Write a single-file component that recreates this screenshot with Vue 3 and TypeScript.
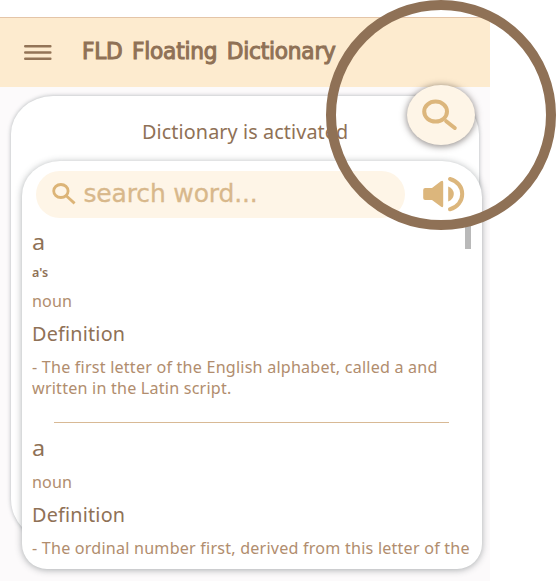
<script setup lang="ts">
interface Entry {
  word: string
  forms?: string
  kind: string
  lines: string[]
}

const entries: Entry[] = [
  {
    word: 'a',
    forms: "a's",
    kind: 'noun',
    lines: ['- The first letter of the English alphabet, called a and', 'written in the Latin script.'],
  },
  {
    word: 'a',
    kind: 'noun',
    lines: ['- The ordinal number first, derived from this letter of the'],
  },
]
</script>

<template>
  <div class="stage">
    <main class="app">
      <header class="bar">
        <svg class="menu" width="28" height="18" viewBox="0 0 28 18">
          <path d="M1.2 2.2H26.4M1.2 8.5H26.4M1.2 14.8H26.4" />
        </svg>
        <h1 class="title">FLD Floating Dictionary</h1>
      </header>

      <section class="card">
        <p class="status">Dictionary is activated</p>
      </section>

      <section class="popup">
        <div class="tools">
          <label class="search">
            <svg width="24" height="22" viewBox="0 0 24 22">
              <ellipse cx="8.9" cy="8" rx="7.2" ry="6.5" />
              <path d="M14.2 12.8L22.6 20.4" />
            </svg>
            <span class="placeholder">search word...</span>
          </label>
          <svg class="sound" width="42" height="36" viewBox="0 0 42 36">
            <path d="M2.2 12H9L17.8 5.2Q20.2 3.8 20.2 6.2V29.8Q20.2 32 17.8 30.6L9 24H2.2Q0.2 24 0.2 22V14Q0.2 12 2.2 12Z" />
            <path d="M25.2 10.4Q30.8 12.8 30.8 18Q30.8 23.2 25.2 25.6Z" />
            <path class="wave" d="M27 3C34.5 5 39.2 11 39.2 18S34.5 31.5 27 33.2" />
          </svg>
        </div>

        <div class="scroll-thumb"></div>

        <div class="entries">
          <article v-for="(entry, i) in entries" :key="i" class="entry">
            <h2 class="word">{{ entry.word }}</h2>
            <p v-if="entry.forms" class="forms">{{ entry.forms }}</p>
            <p class="kind">{{ entry.kind }}</p>
            <h3 class="heading">Definition</h3>
            <p v-for="(line, n) in entry.lines" :key="n" class="line" :class="{ next: n > 0 }">{{ line }}</p>
            <hr v-if="i < entries.length - 1" class="rule" />
          </article>
        </div>
      </section>
    </main>

    <button class="fab" aria-label="Search">
      <svg width="36" height="32" viewBox="0 0 36 32">
        <ellipse cx="13.6" cy="12.6" rx="11.4" ry="10" />
        <path d="M24.2 22.2L32.8 29" />
      </svg>
    </button>
    <div class="ring"></div>
  </div>
</template>

<style>
body {
  background: #fff;
}
</style>

<style scoped>
.stage {
  position: relative;
  box-sizing: border-box;
  width: 557px;
  height: 582px;
  padding-top: 17px;
  overflow: hidden;
  background: #fff;
  font-family: "Noto Sans", sans-serif;
  color: #8f7156;
}
h1, h2, h3, p {
  margin: 0;
  font-weight: 400;
  white-space: nowrap;
  transform-origin: left center;
}
.app {
  position: relative;
  box-sizing: border-box;
  width: 490px;
  height: 564px;
  overflow: hidden;
  background: #fcfafb;
}
.bar {
  display: flex;
  align-items: center;
  box-sizing: border-box;
  height: 70px;
  padding-left: 24px;
  border-top: 1px solid #e4c5a8;
  background: #fdebcf;
}
.menu {
  flex: none;
  fill: none;
  stroke: #937457;
  stroke-width: 2.4;
  stroke-linecap: round;
}
.title {
  margin-left: 30px;
  margin-top: -4px;
  font-family: "DejaVu Sans Condensed", "DejaVu Sans", sans-serif;
  font-stretch: condensed;
  font-size: 23px;
  line-height: 32px;
  letter-spacing: -0.2px;
  word-spacing: 2.6px;
  -webkit-text-stroke: 1px #8f7156;
  transform: scaleX(1.047);
}
.card {
  box-sizing: border-box;
  width: 468.5px;
  height: 445px;
  margin: 9px 0 0 10.5px;
  padding-top: 22px;
  border-radius: 42px 42px 42px 42px / 38px 38px 42px 42px;
  background: #fff;
  box-shadow: 0 0 4px rgba(60, 75, 80, 0.4);
}
.status {
  width: 200px;
  margin-left: 131.5px;
  font-size: 19px;
  line-height: 28px;
  letter-spacing: 0.1px;
  transform: scaleX(1.04);
}
.popup {
  position: absolute;
  left: 21.5px;
  top: 143.5px;
  box-sizing: border-box;
  width: 460px;
  height: 408px;
  border-radius: 38px 40px 25px 25px / 35px 36px 25px 25px;
  background: #fff;
  box-shadow: 0 1px 7px rgba(50, 60, 65, 0.42);
}
.tools {
  display: flex;
  align-items: center;
  gap: 18px;
  padding: 10px 0 0 14px;
}
.search {
  display: flex;
  align-items: center;
  box-sizing: border-box;
  width: 369.5px;
  height: 47px;
  padding-left: 16.5px;
  border-radius: 24px;
  background: #fef5e7;
}
.search svg {
  flex: none;
  fill: none;
  stroke: #dcb477;
  stroke-width: 2.8;
}
.placeholder {
  margin-left: 7.5px;
  font-family: "DejaVu Sans", sans-serif;
  font-size: 25px;
  line-height: 32px;
  letter-spacing: -0.16px;
  color: #d8b88b;
  -webkit-text-stroke: 0.3px #d8b88b;
}
.sound {
  fill: #dcb67c;
}
.wave {
  fill: none;
  stroke: #dcb67c;
  stroke-width: 4;
  stroke-linecap: round;
}
.scroll-thumb {
  width: 5.5px;
  height: 30px;
  margin: 1px 0 -31px 443.5px;
  background: #b9b9b9;
}
.entries {
  padding: 7px 0 0 10.5px;
}
.word {
  height: 34px;
  font-size: 22.5px;
  line-height: 33px;
  transform: scaleX(1.04);
}
.forms {
  height: 25px;
  font-size: 12.5px;
  font-weight: 600;
  line-height: 27px;
}
.kind {
  height: 34px;
  font-size: 15.5px;
  line-height: 34px;
  letter-spacing: 0.1px;
  color: #b18d6e;
  transform: scaleX(1.04);
}
.heading {
  height: 32px;
  font-size: 19px;
  line-height: 32px;
  letter-spacing: 0.2px;
  transform: scaleX(1.04);
}
.line {
  width: 400px;
  height: 34px;
  font-size: 15.5px;
  line-height: 34px;
  letter-spacing: 0.2px;
  color: #b18d6e;
  transform: scaleX(1.04);
}
.line.next {
  height: 22px;
  margin-top: -7px;
  line-height: 22px;
}
.rule {
  width: 395px;
  height: 1px;
  margin: 23px 0 8px 22px;
  border: 0;
  background: #d8b995;
}
.fab {
  position: absolute;
  left: 406.5px;
  top: 85px;
  display: flex;
  align-items: center;
  justify-content: center;
  width: 68px;
  height: 60px;
  padding: 0 2px 0 0;
  border: 0;
  border-radius: 50%;
  background: #fef5e7;
  box-shadow: 0 1px 6px 1px rgba(60, 50, 45, 0.5);
}
.fab svg {
  fill: none;
  stroke: #dcb67c;
  stroke-width: 4;
  stroke-linecap: round;
}
.ring {
  position: absolute;
  left: 326px;
  top: 0;
  box-sizing: border-box;
  width: 230px;
  height: 230px;
  border: 10px solid #8f7156;
  border-radius: 50%;
}
</style>
